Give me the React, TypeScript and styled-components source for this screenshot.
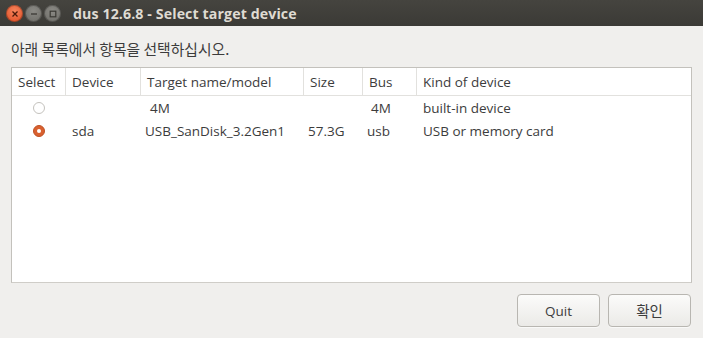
import React from "react";
import styled, { createGlobalStyle } from "styled-components";

const Global = createGlobalStyle`
  html, body { margin: 0; padding: 0; }
  body {
    width: 703px; height: 338px; overflow: hidden;
    background: #f0efed;
    font-family: "Open Sans", "Noto Sans CJK KR", sans-serif;
    color: #3c3c3c;
  }
`;

const Window = styled.div`
  width: 703px;
  height: 338px;
  display: flex;
  flex-direction: column;
  background: #f0efed;
`;

const TitleBar = styled.div`
  height: 26px;
  flex: none;
  display: flex;
  align-items: center;
  background: linear-gradient(#45443f, #3b3a36);
  padding-left: 6px;
`;

const WinButton = styled.div<{ $close?: boolean }>`
  width: 17px;
  height: 17px;
  border-radius: 50%;
  display: flex;
  align-items: center;
  justify-content: center;
  background: ${(p) =>
    p.$close
      ? "radial-gradient(circle at 50% 35%, #f5845c, #df4a21)"
      : "radial-gradient(circle at 50% 35%, #8b8a85, #6a6964)"};
  box-shadow: inset 0 0 0 1px rgba(0,0,0,0.25);
`;

const Controls = styled.div`
  display: flex;
  gap: 2px;
  margin-top: 1px;
`;

const Title = styled.div`
  margin-left: 12px;
  font-family: "Open Sans", sans-serif;
  font-weight: 700;
  font-size: 14.2px;
  color: #dfdbd2;
  letter-spacing: 0.1px;
`;

const Body = styled.div`
  flex: 1;
  display: flex;
  flex-direction: column;
  padding: 13px 11px 12px 11px;
`;

const Prompt = styled.div`
  font-family: "Noto Sans CJK KR", sans-serif;
  font-size: 14.8px;
  color: #3c3c3c;
  height: 20px;
  line-height: 20px;
  margin-bottom: 8px;
`;

const ListBox = styled.div`
  height: 214px;
  background: #ffffff;
  border: 1px solid #c3c1bc;
  border-bottom-color: #cfcdc8;
  display: flex;
  flex-direction: column;
`;

const cols = "54px 75px 163px 59px 54px 1fr";

const HeaderRow = styled.div`
  display: grid;
  grid-template-columns: ${cols};
  height: 27px;
  border-bottom: 1px solid #e2e1de;
`;

const HeaderCell = styled.div<{ $last?: boolean }>`
  display: flex;
  align-items: center;
  padding-left: 6px;
  font-size: 13.5px;
  color: #3c3c3c;
  border-right: ${(p) => (p.$last ? "none" : "1px solid #e2e1de")};
`;

const Row = styled.div`
  display: grid;
  grid-template-columns: ${cols};
  height: 23px;
`;

const Cell = styled.div<{ $pad?: number }>`
  display: flex;
  align-items: center;
  padding-left: ${(p) => p.$pad ?? 6}px;
  font-size: 13.5px;
  color: #3c3c3c;
  white-space: nowrap;
`;

const RadioCell = styled.div`
  display: flex;
  align-items: center;
  justify-content: center;
`;

const Radio = styled.div<{ $on?: boolean }>`
  width: 12px;
  height: 12px;
  border-radius: 50%;
  box-sizing: border-box;
  ${(p) =>
    p.$on
      ? `background: #d9602f; border: 1px solid #bf5124; display:flex; align-items:center; justify-content:center;`
      : `background: #fff; border: 1px solid #c4c2bd;`}
`;

const Dot = styled.div`
  width: 4px;
  height: 4px;
  border-radius: 50%;
  background: #fff;
`;

const Footer = styled.div`
  display: flex;
  justify-content: flex-end;
  gap: 8px;
  margin-top: 11px;
  margin-right: 1px;
`;

const Button = styled.button`
  width: 83px;
  height: 33px;
  box-sizing: border-box;
  border: 1px solid #b8b6b1;
  border-radius: 4px;
  background: linear-gradient(#fbfbfa, #ebeae7);
  font-family: "Open Sans", "Noto Sans CJK KR", sans-serif;
  font-size: 13.5px;
  color: #3c3c3c;
  padding: 0;
  box-shadow: 0 1px 0 rgba(255,255,255,0.6);
`;

const KoLabel = styled.span`
  font-family: "Noto Sans CJK KR", sans-serif;
  font-size: 14.5px;
`;

export default function App() {
  return (
    <Window>
      <Global />
      <TitleBar>
        <Controls>
          <WinButton $close>
            <svg width="8" height="8" viewBox="0 0 8 8">
              <path d="M1.5 1.5 L6.5 6.5 M6.5 1.5 L1.5 6.5" stroke="#4a1a0a" strokeWidth="1.3" />
            </svg>
          </WinButton>
          <WinButton>
            <svg width="8" height="8" viewBox="0 0 8 8">
              <path d="M1 4 H7" stroke="#3a3934" strokeWidth="1.3" />
            </svg>
          </WinButton>
          <WinButton>
            <svg width="8" height="8" viewBox="0 0 8 8">
              <rect x="1.2" y="1.2" width="5.6" height="5.6" fill="none" stroke="#3a3934" strokeWidth="1.2" />
            </svg>
          </WinButton>
        </Controls>
        <Title>dus 12.6.8 - Select target device</Title>
      </TitleBar>
      <Body>
        <Prompt>아래 목록에서 항목을 선택하십시오.</Prompt>
        <ListBox>
          <HeaderRow>
            <HeaderCell>Select</HeaderCell>
            <HeaderCell>Device</HeaderCell>
            <HeaderCell>Target name/model</HeaderCell>
            <HeaderCell>Size</HeaderCell>
            <HeaderCell>Bus</HeaderCell>
            <HeaderCell $last>Kind of device</HeaderCell>
          </HeaderRow>
          <Row>
            <RadioCell><Radio /></RadioCell>
            <Cell></Cell>
            <Cell $pad={9}>4M</Cell>
            <Cell></Cell>
            <Cell $pad={8}>4M</Cell>
            <Cell>built-in device</Cell>
          </Row>
          <Row>
            <RadioCell><Radio $on><Dot /></Radio></RadioCell>
            <Cell>sda</Cell>
            <Cell $pad={4}>USB_SanDisk_3.2Gen1</Cell>
            <Cell $pad={4}>57.3G</Cell>
            <Cell $pad={4}>usb</Cell>
            <Cell>USB or memory card</Cell>
          </Row>
        </ListBox>
        <Footer>
          <Button>Quit</Button>
          <Button><KoLabel>확인</KoLabel></Button>
        </Footer>
      </Body>
    </Window>
  );
}
